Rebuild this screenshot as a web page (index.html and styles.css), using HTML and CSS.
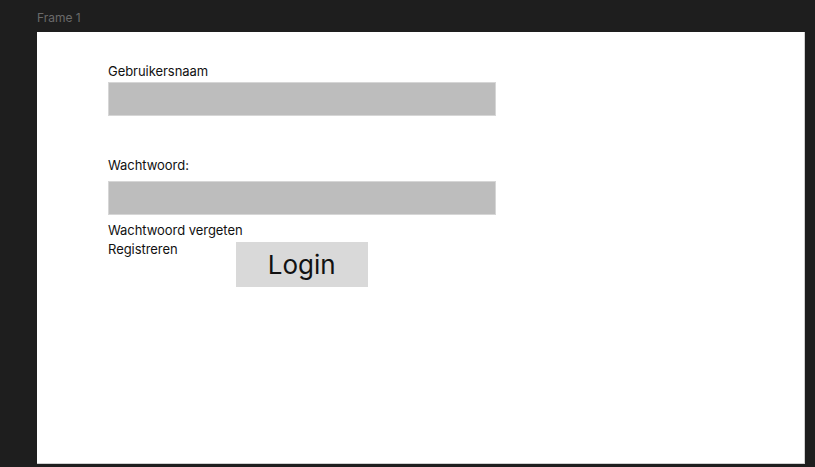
FILE: index.html
```html
<!DOCTYPE html>
<html>
<head>
<meta charset="utf-8">
<link rel="stylesheet" href="styles.css">
</head>
<body>
<div class="canvas">
  <div class="frame-label">Frame 1</div>
  <div class="frame">
    <div class="form">
      <label class="label">Gebruikersnaam</label>
      <div class="input"></div>
      <label class="label label-pw">Wachtwoord:</label>
      <div class="input"></div>
      <div class="link link-forgot">Wachtwoord vergeten</div>
      <div class="row">
        <div class="link">Registreren</div>
        <div class="button">Login</div>
      </div>
    </div>
  </div>
</div>
</body>
</html>
```
FILE: styles.css
```css
html, body {
  margin: 0;
  padding: 0;
  background: #1e1e1e;
  width: 815px;
  height: 467px;
  overflow: hidden;
}
.canvas {
  padding-left: 37px;
  font-family: Inter, "Noto Sans", sans-serif;
}
.frame-label {
  height: 32px;
  box-sizing: border-box;
  padding-top: 10px;
  font-size: 12px;
  line-height: 15px;
  color: #6a6a6a;
}
.frame {
  width: 768px;
  height: 432px;
  background: #ffffff;
  box-sizing: border-box;
  border-right: 1px solid #d0d0d0;
  border-bottom: 1px solid #d0d0d0;
}
.form {
  padding: 31px 0 0 71px;
  display: flex;
  flex-direction: column;
  align-items: flex-start;
  color: #111;
  font-size: 13px;
  line-height: 16px;
  letter-spacing: -0.05px;
}
.label {
  display: block;
  margin-bottom: 3px;
}
.label-pw {
  margin-top: 41px;
  margin-bottom: 8px;
}
.input {
  width: 388px;
  height: 34px;
  box-sizing: border-box;
  background: #bdbdbd;
  border: 1px solid #d6d6d6;
}
.link-forgot {
  margin-top: 7px;
}
.row {
  display: flex;
  align-items: flex-start;
  margin-top: 3px;
}
.button {
  margin-left: 58px;
  margin-top: 1px;
  width: 132px;
  height: 45px;
  background: #d9d9d9;
  display: flex;
  align-items: center;
  justify-content: center;
  font-size: 26px;
  line-height: 30px;
  color: #111;
}
```
